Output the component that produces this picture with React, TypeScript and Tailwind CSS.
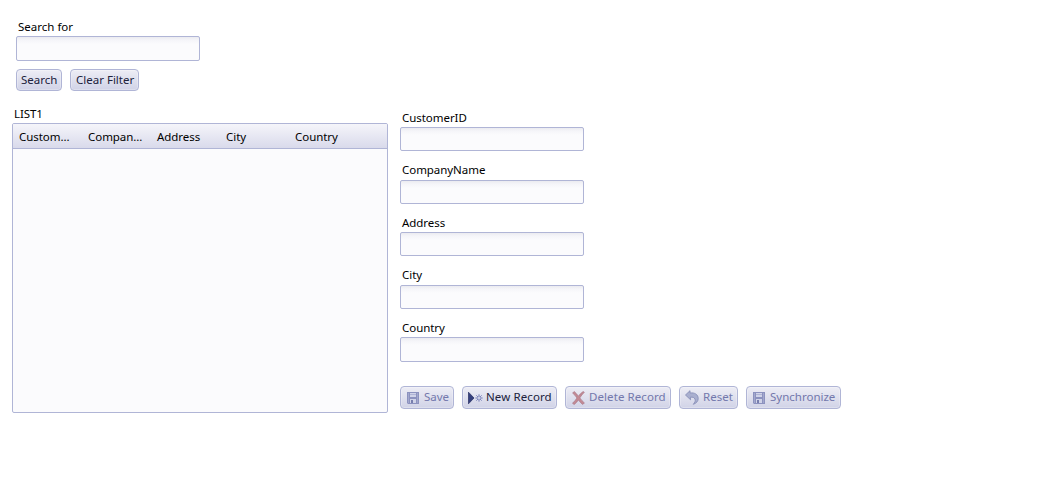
import type { ReactNode } from "react";

const inputClass =
  "block w-[184px] rounded-[2px] border border-[#b0b5d6] bg-[linear-gradient(to_bottom,#ebebf0_0px,#f5f5f9_3px,#fbfbfd_7px)] outline-none";

function SaveIcon() {
  return (
    <svg width="12" height="12" viewBox="0 0 12 12" className="shrink-0">
      <path d="M0 0h12v12H1L0 11z" fill="#8c92bf" />
      <path d="M1 1h1v10H1zM10 1h1v10h-1z" fill="#a3a8cd" />
      <path d="M3 1h6v4H3z" fill="#d0d3e8" />
      <path d="M3 2.500h6" stroke="#b0b5d6" />
      <path d="M3 7h6v4H3z" fill="#d0d3e8" />
      <path d="M4 8h2v3H4z" fill="#777eae" />
    </svg>
  );
}

function NewIcon() {
  return (
    <svg width="15" height="14" viewBox="0 0 15 14" className="shrink-0">
      <path d="M0.500 1.200L6 7L0.500 12.800z" fill="#35407e" stroke="#252d60" strokeWidth="0.700" />
      <path
        d="M11 3.400v2.200M11 8.400v2.200M7.400 7h2.200M12.400 7h2.200M8.400 4.400l1.500 1.500M12.100 8.100l1.500 1.500M13.600 4.400l-1.500 1.500M9.900 8.100l-1.500 1.500"
        stroke="#727bb5"
        strokeWidth="1"
      />
      <circle cx="11" cy="7" r="1.500" fill="none" stroke="#8e96c6" strokeWidth="0.700" />
    </svg>
  );
}

function DeleteIcon() {
  return (
    <svg width="13" height="14" viewBox="0 0 13 14" className="shrink-0">
      <path
        d="M0.600 2L2.300 0.600C4 2 5.200 3.600 6.400 5.200C7.800 3.300 9.400 1.600 11.200 0.500L12.300 1.300C10.500 3 9 4.900 7.800 6.900C9.200 8.800 10.700 10.600 12.400 12L10.500 13.400C8.900 12 7.600 10.400 6.400 8.900C5.200 10.600 4 12.100 2.200 13.500L0.500 12.300C2.300 10.700 3.700 8.900 5 7C3.700 5 2.300 3.400 0.600 2z"
        fill="#c48a94"
        stroke="#a8798a"
        strokeWidth="0.700"
      />
    </svg>
  );
}

function ResetIcon() {
  return (
    <svg width="14" height="15" viewBox="0 0 14 15" className="shrink-0">
      <path
        d="M0.500 5L5 0.700V3C9.800 2.300 13.200 4.700 13.200 8.500C13.200 11 11.500 13.300 8.300 14.300C10 12.500 10.600 10.900 10 9.200C9.400 7.500 7.800 6.900 5.300 7.200L5.600 9.800z"
        fill="#a9afcf"
        stroke="#888fb8"
        strokeWidth="0.900"
        strokeLinejoin="round"
      />
    </svg>
  );
}

interface ButtonProps {
  label: string;
  size: string;
  text: string;
  icon?: ReactNode;
  disabled?: boolean;
}

function Button({ label, size, text, icon, disabled }: ButtonProps) {
  return (
    <button
      disabled={disabled}
      className={`flex shrink-0 items-center rounded-[4px] border border-[#b0b5d6] bg-gradient-to-b from-[#ededf5] to-[#d1d3e7] whitespace-nowrap shadow-[inset_0_0_0_1px_rgba(255,255,255,0.25)] ${size} ${disabled ? "text-[#7378ac]" : "text-[#20223c]"}`}
    >
      {icon}
      <span className={text}>{label}</span>
    </button>
  );
}

const fields = [
  { name: "CustomerID", row: "h-[52px]", gap: "", input: "h-6" },
  { name: "CompanyName", row: "h-[53px]", gap: "mb-px", input: "h-6" },
  { name: "Address", row: "h-[52px]", gap: "", input: "h-6" },
  { name: "City", row: "h-[53px]", gap: "mb-px", input: "h-6" },
  { name: "Country", row: "h-[67px]", gap: "", input: "h-[25px]" },
];

const columns = ["Custom...", "Compan...", "Address", "City", "Country"];

export default function App() {
  return (
    <main className="h-[492px] w-[1054px] overflow-hidden bg-white pt-[18px] pl-3 font-['Noto_Sans','Open_Sans',sans-serif] text-[11.5px] leading-[18px] text-black">
      <section className="h-[87px] pl-1">
        <label className="block">
          <span className="block pl-[2px]">Search for</span>
          <input className={`${inputClass} h-[25px]`} />
        </label>
        <div className="mt-2 flex gap-2">
          <Button label="Search" size="h-[22px] w-[46px]" text="pl-1" />
          <Button label="Clear Filter" size="h-[22px] w-[69px]" text="pl-[5px]" />
        </div>
      </section>
      <div className="flex gap-3">
        <section className="w-[376px]">
          <h2 className="h-[18px] pl-[2px] tracking-[-0.1px]">LIST1</h2>
          <div className="h-[290px] overflow-hidden rounded-[2px] border border-[#b0b5d6] bg-[#fbfbfd]">
            <div className="flex h-[25px] items-center border-b border-[#b0b5d6] bg-gradient-to-b from-[#f5f5fa] to-[#d9daeb] pt-[2px] pl-[6px]">
              {columns.map((column) => (
                <span key={column} className="w-[69px] tracking-[-0.05px]">
                  {column}
                </span>
              ))}
            </div>
          </div>
        </section>
        <section className="pt-1">
          {fields.map((field) => (
            <label key={field.name} className={`block tracking-[-0.05px] ${field.row}`}>
              <span className={`block pl-[2px] ${field.gap}`}>{field.name}</span>
              <input className={`${inputClass} ${field.input}`} />
            </label>
          ))}
          <div className="flex gap-2">
            <Button label="Save" size="h-[23px] w-[54px] pl-[6px]" text="pb-[2px] pl-[5px]" icon={<SaveIcon />} disabled />
            <Button label="New Record" size="h-[23px] w-[95px] pl-[5px]" text="pb-[2px] pl-[3px] tracking-[0.1px]" icon={<NewIcon />} />
            <Button label="Delete Record" size="h-[23px] w-[106px] pl-[6px]" text="pb-[2px] pl-1 tracking-[0.08px]" icon={<DeleteIcon />} disabled />
            <Button label="Reset" size="h-[23px] w-[59px] pl-[5px]" text="pb-[2px] pl-1" icon={<ResetIcon />} disabled />
            <Button label="Synchronize" size="h-[23px] w-[95px] pl-[6px]" text="pb-[2px] pl-[5px]" icon={<SaveIcon />} disabled />
          </div>
        </section>
      </div>
    </main>
  );
}
